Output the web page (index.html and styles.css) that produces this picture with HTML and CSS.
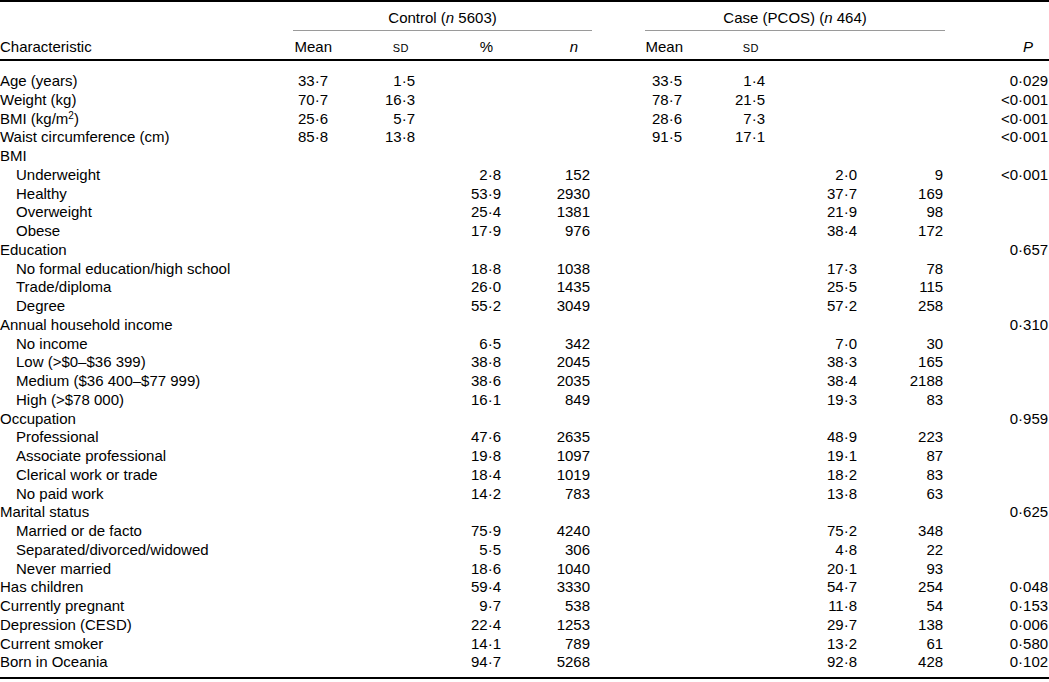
FILE: index.html
```html
<!DOCTYPE html>
<html lang="en">
<head>
  <meta charset="UTF-8">
  <title>Characteristics by PCOS status</title>
  <link rel="stylesheet" href="styles.css">
</head>
<body>

<table class="tabla">
  <colgroup>
    <col class="c-char">
    <col class="c-mean">
    <col class="c-sd">
    <col class="c-pct">
    <col class="c-n">
    <col class="c-gap">
    <col class="c-mean2">
    <col class="c-sd2">
    <col class="c-pct2">
    <col class="c-n2">
    <col class="c-p">
  </colgroup>
  <thead>
    <tr class="grupo">
      <th></th>
      <th colspan="4" class="regla">Control (<i>n</i> 5603)</th>
      <th></th>
      <th colspan="4" class="regla">Case (PCOS) (<i>n</i> 464)</th>
      <th></th>
    </tr>
    <tr class="cabecera">
      <th class="lbl">Characteristic</th>
      <th class="h-mean">Mean</th>
      <th class="h-sd"><span class="sc">sd</span></th>
      <th class="h-pct">%</th>
      <th class="h-n"><i>n</i></th>
      <th></th>
      <th class="h-mean">Mean</th>
      <th class="h-sd"><span class="sc">sd</span></th>
      <th></th>
      <th></th>
      <th class="h-p"><i>P</i></th>
    </tr>
  </thead>
  <tbody>
    <tr><td>Age (years)</td><td>33·7</td><td>1·5</td><td></td><td></td><td></td><td>33·5</td><td>1·4</td><td></td><td></td><td>0·029</td></tr>
    <tr><td>Weight (kg)</td><td>70·7</td><td>16·3</td><td></td><td></td><td></td><td>78·7</td><td>21·5</td><td></td><td></td><td>&lt;0·001</td></tr>
    <tr><td>BMI (kg/m<sup>2</sup>)</td><td>25·6</td><td>5·7</td><td></td><td></td><td></td><td>28·6</td><td>7·3</td><td></td><td></td><td>&lt;0·001</td></tr>
    <tr><td>Waist circumference (cm)</td><td>85·8</td><td>13·8</td><td></td><td></td><td></td><td>91·5</td><td>17·1</td><td></td><td></td><td>&lt;0·001</td></tr>

    <tr><td>BMI</td><td></td><td></td><td></td><td></td><td></td><td></td><td></td><td></td><td></td><td></td></tr>
    <tr><td class="sub">Underweight</td><td></td><td></td><td>2·8</td><td>152</td><td></td><td></td><td></td><td>2·0</td><td>9</td><td>&lt;0·001</td></tr>
    <tr><td class="sub">Healthy</td><td></td><td></td><td>53·9</td><td>2930</td><td></td><td></td><td></td><td>37·7</td><td>169</td><td></td></tr>
    <tr><td class="sub">Overweight</td><td></td><td></td><td>25·4</td><td>1381</td><td></td><td></td><td></td><td>21·9</td><td>98</td><td></td></tr>
    <tr><td class="sub">Obese</td><td></td><td></td><td>17·9</td><td>976</td><td></td><td></td><td></td><td>38·4</td><td>172</td><td></td></tr>

    <tr><td>Education</td><td></td><td></td><td></td><td></td><td></td><td></td><td></td><td></td><td></td><td>0·657</td></tr>
    <tr><td class="sub">No formal education/high school</td><td></td><td></td><td>18·8</td><td>1038</td><td></td><td></td><td></td><td>17·3</td><td>78</td><td></td></tr>
    <tr><td class="sub">Trade/diploma</td><td></td><td></td><td>26·0</td><td>1435</td><td></td><td></td><td></td><td>25·5</td><td>115</td><td></td></tr>
    <tr><td class="sub">Degree</td><td></td><td></td><td>55·2</td><td>3049</td><td></td><td></td><td></td><td>57·2</td><td>258</td><td></td></tr>

    <tr><td>Annual household income</td><td></td><td></td><td></td><td></td><td></td><td></td><td></td><td></td><td></td><td>0·310</td></tr>
    <tr><td class="sub">No income</td><td></td><td></td><td>6·5</td><td>342</td><td></td><td></td><td></td><td>7·0</td><td>30</td><td></td></tr>
    <tr><td class="sub">Low (&gt;$0–$36 399)</td><td></td><td></td><td>38·8</td><td>2045</td><td></td><td></td><td></td><td>38·3</td><td>165</td><td></td></tr>
    <tr><td class="sub">Medium ($36 400–$77 999)</td><td></td><td></td><td>38·6</td><td>2035</td><td></td><td></td><td></td><td>38·4</td><td>2188</td><td></td></tr>
    <tr><td class="sub">High (&gt;$78 000)</td><td></td><td></td><td>16·1</td><td>849</td><td></td><td></td><td></td><td>19·3</td><td>83</td><td></td></tr>

    <tr><td>Occupation</td><td></td><td></td><td></td><td></td><td></td><td></td><td></td><td></td><td></td><td>0·959</td></tr>
    <tr><td class="sub">Professional</td><td></td><td></td><td>47·6</td><td>2635</td><td></td><td></td><td></td><td>48·9</td><td>223</td><td></td></tr>
    <tr><td class="sub">Associate professional</td><td></td><td></td><td>19·8</td><td>1097</td><td></td><td></td><td></td><td>19·1</td><td>87</td><td></td></tr>
    <tr><td class="sub">Clerical work or trade</td><td></td><td></td><td>18·4</td><td>1019</td><td></td><td></td><td></td><td>18·2</td><td>83</td><td></td></tr>
    <tr><td class="sub">No paid work</td><td></td><td></td><td>14·2</td><td>783</td><td></td><td></td><td></td><td>13·8</td><td>63</td><td></td></tr>

    <tr><td>Marital status</td><td></td><td></td><td></td><td></td><td></td><td></td><td></td><td></td><td></td><td>0·625</td></tr>
    <tr><td class="sub">Married or de facto</td><td></td><td></td><td>75·9</td><td>4240</td><td></td><td></td><td></td><td>75·2</td><td>348</td><td></td></tr>
    <tr><td class="sub">Separated/divorced/widowed</td><td></td><td></td><td>5·5</td><td>306</td><td></td><td></td><td></td><td>4·8</td><td>22</td><td></td></tr>
    <tr><td class="sub">Never married</td><td></td><td></td><td>18·6</td><td>1040</td><td></td><td></td><td></td><td>20·1</td><td>93</td><td></td></tr>

    <tr><td>Has children</td><td></td><td></td><td>59·4</td><td>3330</td><td></td><td></td><td></td><td>54·7</td><td>254</td><td>0·048</td></tr>
    <tr><td>Currently pregnant</td><td></td><td></td><td>9·7</td><td>538</td><td></td><td></td><td></td><td>11·8</td><td>54</td><td>0·153</td></tr>
    <tr><td>Depression (CESD)</td><td></td><td></td><td>22·4</td><td>1253</td><td></td><td></td><td></td><td>29·7</td><td>138</td><td>0·006</td></tr>
    <tr><td>Current smoker</td><td></td><td></td><td>14·1</td><td>789</td><td></td><td></td><td></td><td>13·2</td><td>61</td><td>0·580</td></tr>
    <tr><td>Born in Oceania</td><td></td><td></td><td>94·7</td><td>5268</td><td></td><td></td><td></td><td>92·8</td><td>428</td><td>0·102</td></tr>
  </tbody>
</table>

</body>
</html>
```

FILE: styles.css
```css
body {
  margin: 0;
  padding: 0;
  background-color: #ffffff;
  color: #000000;
  font-family: 'Liberation Sans', Arial, Helvetica, sans-serif;
  font-size: 15px;
}

.tabla {
  width: 1049px;
  table-layout: fixed;
  border-collapse: separate;
  border-spacing: 0;
  border-top: 2px solid #000000;
  border-bottom: 2px solid #000000;
}

/* anchos de columna */
.c-char  { width: 293px; }
.c-mean  { width: 39px; }
.c-sd    { width: 83px; }
.c-pct   { width: 86px; }
.c-n     { width: 91px; }
.c-gap   { width: 53px; }
.c-mean2 { width: 38px; }
.c-sd2   { width: 82px; }
.c-pct2  { width: 92px; }
.c-n2    { width: 88px; }
.c-p     { width: 104px; }

th, td {
  padding: 0;
  line-height: 18.75px;
  white-space: nowrap;
  font-weight: normal;
}

thead th {
  line-height: 19px;
  padding-top: 6px;
  padding-bottom: 3px;
  text-align: right;
}

.grupo th.regla {
  text-align: center;
  border-bottom: 1px solid #9a9a9a;
}

.cabecera th {
  border-bottom: 2px solid #000000;
}

.cabecera th.lbl {
  text-align: left;
}

.cabecera th:nth-child(3) { padding-right: 6px; }
.cabecera th:nth-child(4) { padding-right: 8px; }
.cabecera th:nth-child(5) { padding-right: 14px; }
.cabecera th:nth-child(8) { padding-right: 6px; }
.cabecera th:nth-child(11) { padding-right: 16px; }

.sc {
  font-variant: small-caps;
  letter-spacing: 0.5px;
}

sup {
  font-size: 10px;
  line-height: 0;
  vertical-align: 5px;
}

/* celdas de datos */
tbody td {
  text-align: right;
}

tbody td:first-child {
  text-align: left;
}

tbody td.sub {
  padding-left: 16px;
}

tbody td:nth-child(2)  { padding-right: 4px; }
tbody td:nth-child(5)  { padding-right: 2px; }
tbody td:nth-child(7)  { padding-right: 1px; }
tbody td:nth-child(10) { padding-right: 2px; }
tbody td:nth-child(11) { padding-right: 1px; }

tbody tr:first-child td {
  padding-top: 11px;
}

tbody tr:last-child td {
  padding-bottom: 5px;
}
```
